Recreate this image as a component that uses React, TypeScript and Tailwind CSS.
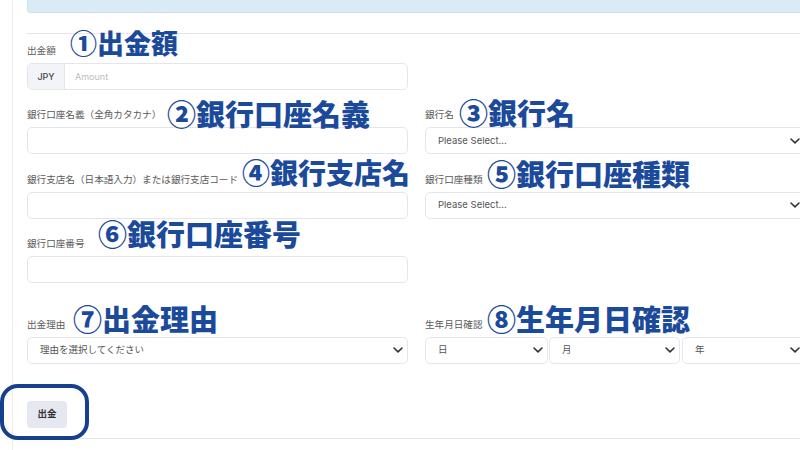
import React from "react";

const Chevron = () => (
  <svg width="10" height="6" viewBox="0 0 10 6" fill="none" className="shrink-0">
    <path d="M1 1l4 3.8L9 1" stroke="#333" strokeWidth="1.6" strokeLinecap="round" strokeLinejoin="round" />
  </svg>
);

const Label = ({ children }: { children: React.ReactNode }) => (
  <div className="h-[12px] leading-[12px] text-[9.6px] text-[#5a5a5a] whitespace-nowrap">{children}</div>
);

const TextInput = () => (
  <div className="mt-[6px] h-[27px] rounded-[5px] border border-[#e4e6ee] bg-white" />
);

const Select = ({ text, className = "" }: { text: string; className?: string }) => (
  <div
    className={
      "mt-[6px] h-[27px] rounded-[5px] border border-[#e4e6ee] bg-white flex items-center justify-between pl-[12px] pr-[4px] " +
      className
    }
  >
    <span className="text-[9.5px] text-[#555]">{text}</span>
    <Chevron />
  </div>
);

const Note = ({ text, left, top, size }: { text: string; left: number; top: number; size: number }) => (
  <span
    className="absolute leading-none font-black text-[#1c4a9b] whitespace-nowrap"
    style={{ left, top, fontSize: size, fontFamily: '"Noto Sans CJK JP", sans-serif' }}
  >
    {text}
  </span>
);

export default function App() {
  return (
    <div
      className="relative w-[800px] h-[450px] overflow-hidden bg-white"
      style={{ fontFamily: 'Inter, "Noto Sans CJK JP", sans-serif' }}
    >
      <div className="ml-[12px] h-full border-l border-[#ededf0] pl-[14px]">
        <div className="w-[781px]">
          <div className="h-[13px] bg-[#d9ecf6] border border-t-0 border-[#c8e1ef] rounded-b-[4px]" />
          <div className="mt-[20px] border-t border-[#e8e8ec]" />

          <div className="mt-[11px] grid grid-cols-[381px_380px] gap-x-[17px] gap-y-[19.3px]">
            <div>
              <Label>出金額</Label>
              <div className="mt-[6px] h-[27px] rounded-[5px] border border-[#e4e6ee] bg-white flex overflow-hidden">
                <div className="w-[37px] bg-[#f3f4f7] border-r border-[#e4e6ee] flex items-center justify-center text-[9px] font-medium text-[#444]">
                  JPY
                </div>
                <div className="flex items-center pl-[10px] text-[9px] text-[#bbbbc2]">Amount</div>
              </div>
            </div>
            <div />

            <div>
              <Label>銀行口座名義（全角カタカナ）</Label>
              <TextInput />
            </div>
            <div>
              <Label>銀行名</Label>
              <Select text="Please Select..." />
            </div>

            <div>
              <Label>銀行支店名（日本語入力）または銀行支店コード</Label>
              <TextInput />
            </div>
            <div>
              <Label>銀行口座種類</Label>
              <Select text="Please Select..." />
            </div>

            <div>
              <Label>銀行口座番号</Label>
              <TextInput />
            </div>
            <div />
          </div>

          <div className="mt-[36px] grid grid-cols-[381px_380px] gap-x-[17px]">
            <div>
              <Label>出金理由</Label>
              <Select text="理由を選択してください" />
            </div>
            <div>
              <Label>生年月日確認</Label>
              <div className="flex">
                <Select text="日" className="w-[123px]" />
                <Select text="月" className="w-[131px] ml-[1px]" />
                <Select text="年" className="flex-1 ml-[2px]" />
              </div>
            </div>
          </div>

          <button className="mt-[37px] w-[40px] h-[27px] rounded-[4px] bg-[#e6e8f1] text-[9.5px] font-bold text-[#333] flex items-center justify-center">
            出金
          </button>
          <div className="mt-[10px] border-t border-[#e8e8ec]" />
        </div>
      </div>

      <Note text="①出金額" left={70} top={29} size={27} />
      <Note text="②銀行口座名義" left={167} top={99} size={29} />
      <Note text="③銀行名" left={459} top={98} size={29} />
      <Note text="④銀行支店名" left={242} top={158} size={28} />
      <Note text="⑤銀行口座種類" left={487} top={159} size={29} />
      <Note text="⑥銀行口座番号" left={98} top={219} size={29} />
      <Note text="⑦出金理由" left={73} top={304} size={29} />
      <Note text="⑧生年月日確認" left={487} top={304} size={29} />

      <div className="absolute left-0 top-[384px] w-[89px] h-[56px] rounded-[18px] border-[4.5px] border-[#14408d]" />
    </div>
  );
}
